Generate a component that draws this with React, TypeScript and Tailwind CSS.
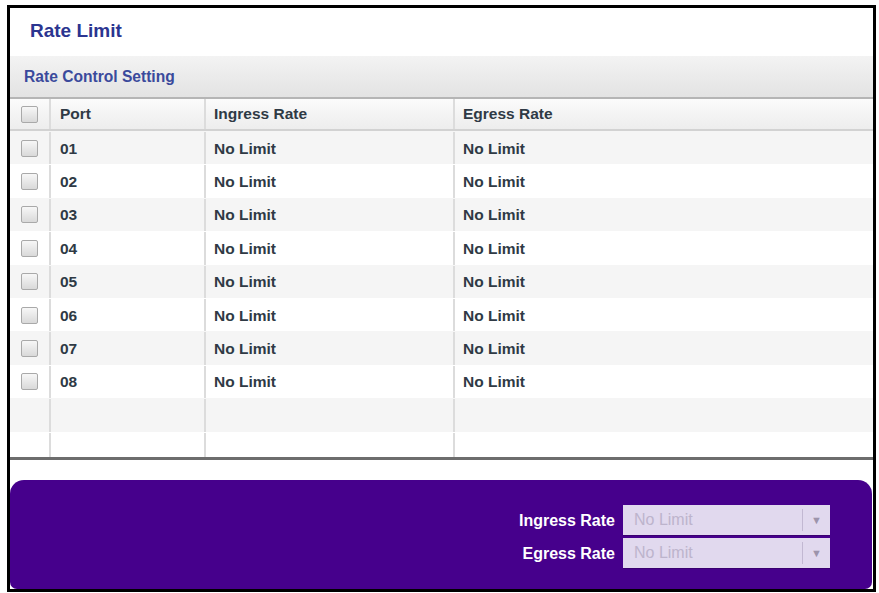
import React from "react"

const ports = ["01", "02", "03", "04", "05", "06", "07", "08"]

function Check() {
  return (
    <span className="block w-[17px] h-[17px] rounded-[2px] border border-[#a9a9a9] bg-gradient-to-b from-[#f7f7f7] to-[#d9d9d9]" />
  )
}

function RateSelect() {
  return (
    <div className="w-[207px] h-[31px] flex items-center bg-[#e1d9ee] border-b border-[#3a0070]">
      <span className="flex-1 pl-[11px] text-[16px] text-[#bdb4cc]">No Limit</span>
      <span className="w-px h-[22px] bg-[#c2b8d2]" />
      <span className="w-[27px] flex justify-center text-[11px] text-[#9d94ab]">▼</span>
    </div>
  )
}

export default function App() {
  const rows = [...ports.map((p) => p), "", ""]

  return (
    <div className="w-[879px] h-[593px] bg-white font-['Liberation_Sans',Arial,sans-serif]">
      <div className="ml-[7px] pt-[5px]">
        <div className="w-[869px] h-[587px] border-[3px] border-black flex flex-col">
          {/* title */}
          <div className="h-[48px] flex items-center pl-[20px] pb-[2px]">
            <h1 className="text-[19px] font-bold text-[#2b3590]">Rate Limit</h1>
          </div>

          {/* section header */}
          <div className="h-[43px] flex items-center pl-[14px] bg-gradient-to-b from-[#f3f3f3] to-[#e3e3e3] border-b-2 border-[#b5b5b5]">
            <h2 className="text-[15.6px] font-bold text-[#3a4a9c]">Rate Control Setting</h2>
          </div>

          {/* table */}
          <div className="h-[358px] overflow-hidden text-[15.5px] font-bold text-[#2f3a45]">
            <div className="h-[32px] grid grid-cols-[41px_155px_249px_1fr] bg-gradient-to-b from-[#fbfbfb] to-[#ededed] border-b-2 border-[#d2d2d2]">
              <div className="flex items-center justify-center border-r-2 border-[#dcdcdc]">
                <Check />
              </div>
              <div className="flex items-center pl-[9px] border-r-2 border-[#dcdcdc]">Port</div>
              <div className="flex items-center pl-[8px] border-r-2 border-[#dcdcdc]">Ingress Rate</div>
              <div className="flex items-center pl-[8px]">Egress Rate</div>
            </div>
            {rows.map((p, i) => (
              <div
                key={i}
                className={`h-[33.4px] grid grid-cols-[41px_155px_249px_1fr] pt-px ${i % 2 === 0 ? "bg-[#f5f5f5]" : "bg-white"}`}
              >
                <div className="flex items-center justify-center border-r-2 border-[#dcdcdc]">
                  {p && <Check />}
                </div>
                <div className="flex items-center pl-[9px] border-r-2 border-[#dcdcdc]">{p}</div>
                <div className="flex items-center pl-[8px] border-r-2 border-[#dcdcdc]">{p && "No Limit"}</div>
                <div className="flex items-center pl-[8px]">{p && "No Limit"}</div>
              </div>
            ))}
          </div>
          <div className="h-[3px] bg-[#6d6d6d]" />

          {/* settings panel */}
          <div className="mt-[20px] mr-px flex-1 rounded-t-[14px] rounded-b-[7px] bg-[#46008c] pt-[25px] pr-[42px] flex flex-col items-end gap-[2px]">
            <div className="flex items-center gap-[8px]">
              <span className="text-[16px] font-bold text-white">Ingress Rate</span>
              <RateSelect />
            </div>
            <div className="flex items-center gap-[8px]">
              <span className="text-[16px] font-bold text-white">Egress Rate</span>
              <RateSelect />
            </div>
          </div>
        </div>
      </div>
    </div>
  )
}
